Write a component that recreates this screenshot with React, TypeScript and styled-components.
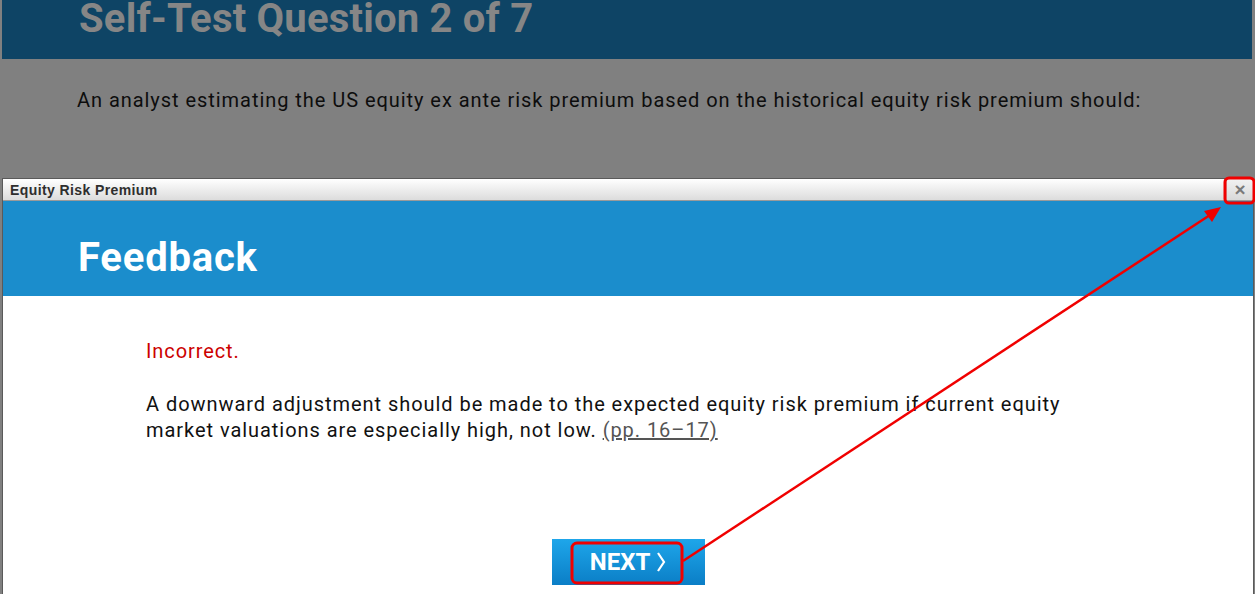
import React from 'react'
import styled, { createGlobalStyle } from 'styled-components'

const GlobalStyle = createGlobalStyle`
    html, body {
        margin: 0;
        padding: 0;
        background: #808080;
    }
    * {
        box-sizing: border-box;
    }
`

const Page = styled.div`
    position: relative;
    width: 1255px;
    height: 594px;
    overflow: hidden;
    background: #808080;
    font-family: Roboto, 'Liberation Sans', sans-serif;
    display: flex;
    flex-direction: column;
`

const Banner = styled.div`
    margin: 0 3px 0 2px;
    height: 59px;
    background: #0e4465;
    padding-left: 77px;
    display: flex;
    align-items: flex-start;
    overflow: hidden;
`

const BannerTitle = styled.h1`
    margin: 0;
    margin-top: -5px;
    font-size: 40px;
    line-height: 48px;
    font-weight: 700;
    letter-spacing: 0.2px;
    color: #868686;
`

const Question = styled.p`
    margin: 28px 0 0 77px;
    font-size: 20px;
    line-height: 26px;
    letter-spacing: 0.95px;
    color: #0d0d0d;
`

const Dialog = styled.div`
    margin: 65px 1px 0 2px;
    flex: 1;
    display: flex;
    flex-direction: column;
    background: #fff;
    border: 1px solid #5a5a5a;
    border-bottom: none;
`

const TitleBar = styled.div`
    height: 22px;
    display: flex;
    align-items: center;
    justify-content: space-between;
    background: linear-gradient(#ffffff, #dcdcdc);
    border-bottom: 1px solid #9a9a9a;
    padding-left: 7px;
`

const TitleText = styled.span`
    font-family: 'Liberation Sans', Arial, sans-serif;
    font-weight: 700;
    font-size: 14px;
    letter-spacing: 0.4px;
    color: #2e2e2e;
`

const CloseButton = styled.button`
    width: 27px;
    height: 21px;
    padding: 0;
    border: none;
    border-left: 1px solid #c8c8c8;
    background: linear-gradient(#f2f2f2, #d9d9d9);
    color: #7a7a7a;
    font-family: 'Liberation Sans', Arial, sans-serif;
    font-weight: 700;
    font-size: 19px;
    line-height: 21px;
    text-align: center;
`

const Band = styled.div`
    height: 95px;
    background: #1b8dcc;
    padding-left: 75px;
    display: flex;
    align-items: center;
`

const BandTitle = styled.h2`
    margin: 0;
    margin-top: 17px;
    font-size: 40px;
    font-weight: 700;
    letter-spacing: 0.8px;
    color: #fff;
`

const Body = styled.div`
    flex: 1;
    padding: 42px 150px 0 143px;
    display: flex;
    flex-direction: column;
`

const Verdict = styled.p`
    margin: 0;
    font-size: 20px;
    line-height: 26px;
    letter-spacing: 0.9px;
    color: #cc0000;
`

const Explanation = styled.p`
    margin: 27px 0 0;
    max-width: 960px;
    font-size: 20px;
    line-height: 26px;
    letter-spacing: 0.95px;
    color: #111;
`

const PageRef = styled.a`
    color: #555;
    text-decoration: underline;
`

const Actions = styled.div`
    margin-top: 96px;
    display: flex;
    justify-content: center;
    margin-left: -143px;
    margin-right: -150px;
`

const NextButton = styled.button`
    width: 153px;
    height: 46px;
    border: none;
    padding: 0;
    background: linear-gradient(#1ea6ea, #0b7ec6);
    color: #fff;
    font-family: Roboto, sans-serif;
    font-weight: 700;
    font-size: 24px;
    display: flex;
    align-items: center;
    justify-content: center;
    gap: 6px;
`

const Overlay = styled.svg`
    position: absolute;
    inset: 0;
    pointer-events: none;
`

const Chevron = () => (
    <svg width="10" height="20" viewBox="0 0 10 20">
        <path d="M2 1 L8 10 L2 19" fill="none" stroke="#fff" strokeWidth="2.2" />
    </svg>
)

export default function App() {
    return (
        <>
            <GlobalStyle />
            <Page>
                <Banner>
                    <BannerTitle>Self-Test Question 2 of 7</BannerTitle>
                </Banner>
                <Question>
                    An analyst estimating the US equity ex ante risk premium based on the historical equity risk premium should:
                </Question>
                <Dialog>
                    <TitleBar>
                        <TitleText>Equity Risk Premium</TitleText>
                        <CloseButton>×</CloseButton>
                    </TitleBar>
                    <Band>
                        <BandTitle>Feedback</BandTitle>
                    </Band>
                    <Body>
                        <Verdict>Incorrect.</Verdict>
                        <Explanation>
                            A downward adjustment should be made to the expected equity risk premium if current equity
                            market valuations are especially high, not low. <PageRef>(pp. 16–17)</PageRef>
                        </Explanation>
                        <Actions>
                            <NextButton>
                                NEXT
                                <Chevron />
                            </NextButton>
                        </Actions>
                    </Body>
                </Dialog>

                {/* red call-outs drawn on top */}
                <Overlay width="1255" height="594" viewBox="0 0 1255 594">
                    <rect x="572" y="543" width="110" height="40" rx="5" fill="none" stroke="#f00000" strokeWidth="3" />
                    <rect x="1225" y="178" width="29" height="25" rx="4" fill="none" stroke="#f00000" strokeWidth="3" />
                    <line x1="683" y1="561" x2="1210" y2="215" stroke="#f00000" strokeWidth="2.5" />
                    <polygon points="1221,207 1204,211 1212,222" fill="#f00000" />
                </Overlay>
            </Page>
        </>
    )
}
